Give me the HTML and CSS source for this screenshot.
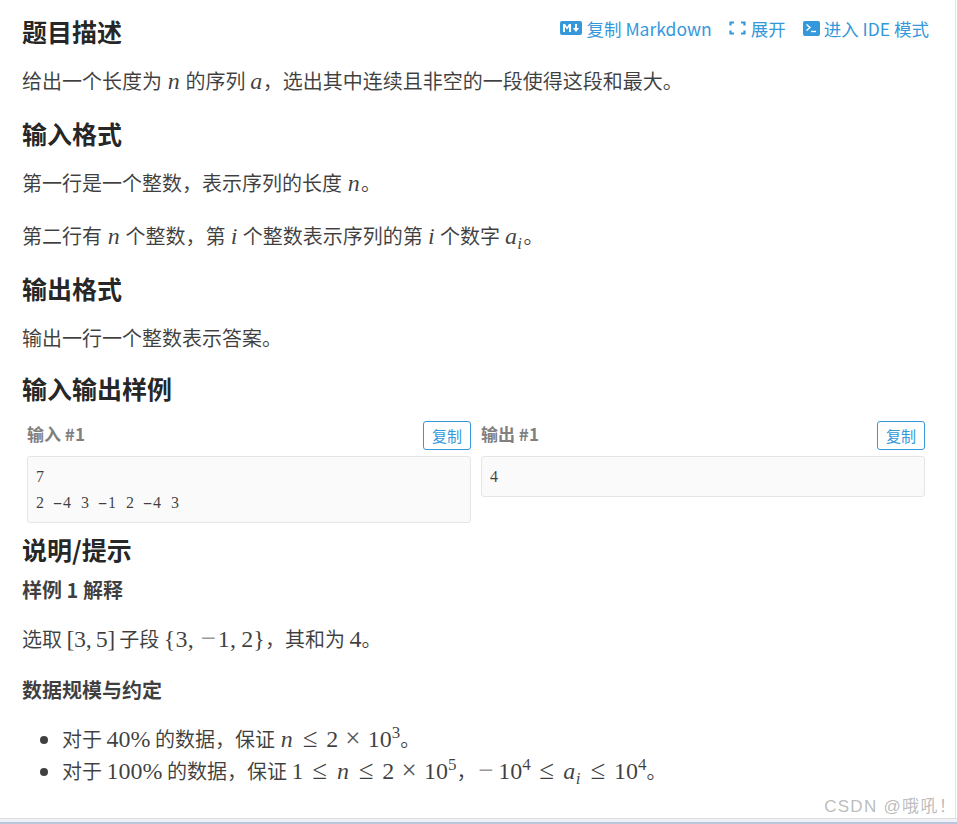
FILE: index.html
```html
<!DOCTYPE html>
<html lang="zh">
<head>
<meta charset="utf-8">
<title>题目描述</title>
<link rel="stylesheet" href="styles.css">
</head>
<body>
<main class="page">
  <div class="head-row">
    <h2>题目描述</h2>
    <div class="actions">
      <a class="action act-md"><svg class="ic-md" viewBox="0 0 22 14"><rect width="22" height="14" rx="2" fill="#3498db"/><path d="M3 11V3h2l2 3 2-3h2v8H9V6L7 8.500 5 6v5z" fill="#fff"/><path d="M15 3h2v4h2.200l-3.200 4-3.200-4H15z" fill="#fff"/></svg>复制 Markdown</a>
      <a class="action"><svg class="ic-ex" viewBox="0 0 17 14"><path d="M5 1.500H1.500v3M1.500 9.500v3H5M12 1.500h3.500v3M15.500 9.500v3H12" fill="none" stroke="#3498db" stroke-width="2.200"/></svg>展开</a>
      <a class="action act-ide"><svg class="ic-term" viewBox="0 0 17 15"><rect width="17" height="15" rx="2" fill="#3498db"/><path d="M3.500 3.500 7 6.500 3.500 9.500" fill="none" stroke="#fff" stroke-width="1.400"/><path d="M8 10.500h5" stroke="#fff" stroke-width="1.400"/></svg>进入 IDE 模式</a>
    </div>
  </div>
  <p class="p1">给出一个长度为 <i class="m vn">n</i> 的序列 <i class="m va">a</i>，选出其中连续且非空的一段使得这段和最大。</p>
  <h2 class="h2b">输入格式</h2>
  <p class="p2">第一行是一个整数，表示序列的长度 <i class="m vn">n</i>。</p>
  <p class="p3">第二行有 <i class="m vn">n</i> 个整数，第 <i class="m vi">i</i> 个整数表示序列的第 <i class="m vi">i</i> 个数字 <i class="m va">a</i><sub class="m">i</sub>。</p>
  <h2 class="h2c">输出格式</h2>
  <p class="p5">输出一行一个整数表示答案。</p>
  <h2 class="h2d">输入输出样例</h2>
  <div class="samples">
    <section class="sample">
      <div class="sample-head"><span class="sample-title">输入 #1</span><button class="copy">复制</button></div>
      <pre class="code">7
2 <span class="hy">-</span>4 3 <span class="hy">-</span>1 2 <span class="hy">-</span>4 3</pre>
    </section>
    <section class="sample">
      <div class="sample-head"><span class="sample-title">输出 #1</span><button class="copy">复制</button></div>
      <pre class="code">4</pre>
    </section>
  </div>
  <h2 class="h2e">说明/提示</h2>
  <h3 class="h3a">样例 1 解释</h3>
  <p class="p4">选取 <span class="m n tight">[3,&#8201;5]</span> 子段 <span class="m n brace">{3,&#8201;<span class="op minus">−</span>1,&#8201;2}</span>，其和为 <span class="m n">4</span>。</p>
  <h4 class="h4a">数据规模与约定</h4>
  <ul class="list">
    <li>对于 <span class="m n">40%</span> 的数据，保证 <i class="m vn">n</i><span class="op rel">≤</span><span class="m n">2</span><span class="op bin">×</span><span class="m n">10<sup>3</sup></span>。</li>
    <li>对于 <span class="m n">100%</span> 的数据，保证 <span class="m n">1</span><span class="op rel">≤</span><i class="m vn">n</i><span class="op rel">≤</span><span class="m n">2</span><span class="op bin">×</span><span class="m n">10<sup>5</sup></span>，<span class="op minus neg">−</span><span class="m n">10<sup>4</sup></span><span class="op rel">≤</span><i class="m va">a</i><sub class="m">i</sub><span class="op rel">≤</span><span class="m n">10<sup>4</sup></span>。</li>
  </ul>
</main>
<div class="bottom"></div>
<div class="watermark">CSDN @哦吼！</div>
</body>
</html>
```
FILE: styles.css
```css
html, body { margin: 0; padding: 0; background: #fff; }
body {
  width: 957px;
  height: 824px;
  overflow: hidden;
  position: relative;
  font-family: "Noto Sans CJK SC", "Noto Sans", sans-serif;
  color: rgba(0, 0, 0, .75);
  font-size: 20px;
}
.page {
  box-sizing: border-box;
  width: 956px;
  height: 818px;
  padding: 13px 27px 0 22px;
  border-right: 1px solid #e4e4e4;
}
h2 {
  font-size: 25px;
  line-height: 36px;
  font-weight: 700;
  margin: 0;
  color: rgba(0, 0, 0, .87);
}
p { margin: 0; line-height: 34px; }
.head-row { display: flex; justify-content: space-between; align-items: flex-start; }
.actions { display: flex; gap: 18px; align-items: center; height: 30px; font-size: 17.500px; color: #3498db; white-space: nowrap; margin-right: -1px; }
.action { display: flex; align-items: center; gap: 5px; }
.act-md { gap: 4px; margin-right: -1px; }
.act-ide { gap: 4px; margin-left: -1px; }
.ic-md { width: 22px; height: 14px; }
.ic-ex { width: 17px; height: 14px; }
.ic-term { width: 17px; height: 15px; }
.p1 { margin-top: 15px; }
.h2b { margin-top: 17px; }
.p2 { margin-top: 15px; }
.p3 { margin-top: 19px; }
.h2c { margin-top: 17px; }
.p5 { margin-top: 15px; }
.h2d { margin-top: 15px; }
.m { font-family: "Liberation Serif", serif; font-size: 24px; line-height: 1; }
.n { font-style: normal; }
.tight { letter-spacing: -.4px; }
.brace { letter-spacing: .2px; }
.vn, .vi, .va { display: inline-block; text-align: center; }
.vn { width: 14.500px; }
.vi { width: 8.300px; }
.va { width: 12.800px; }
.op {
  display: inline-block;
  width: 18.800px;
  text-align: center;
  font-family: "Liberation Serif", serif;
  font-size: 27px;
  line-height: 1;
}
.rel { margin: 0 6.700px; }
.bin { margin: 0 5.400px; color: #555; }
.minus { color: #999; }
.neg { margin-right: 3px; }
sub, sup { line-height: 0; }
sup { font-size: 17px; }
sub.m { font-size: 17px; font-style: italic; margin-right: 1.500px; }
.samples { display: flex; gap: 10px; padding: 0 5px; margin-top: 14px; align-items: flex-start; margin-right: -2px; }
.sample { flex: 1 1 0; min-width: 0; }
.sample-head { display: flex; justify-content: space-between; align-items: center; height: 30px; margin-bottom: 6px; }
.sample-title { font-size: 17px; font-weight: 700; color: #808080; padding-bottom: 4px; }
.copy {
  box-sizing: border-box;
  width: 48px;
  height: 29px;
  padding: 0;
  background: #fff;
  border: 1px solid #3498db;
  border-radius: 3px;
  font: 15px "Noto Sans CJK SC", sans-serif;
  color: #3498db;
}
.code {
  margin: 0;
  padding: 7px 8px 6px;
  background: #fafafa;
  border: 1px solid #e5e5e5;
  border-radius: 3px;
  font-family: "Liberation Serif", serif;
  font-size: 16px;
  letter-spacing: 1px;
  word-spacing: 4px;
  line-height: 26px;
  color: rgba(0, 0, 0, .75);
}
.hy { display: inline-block; width: 9px; text-align: center; transform: scaleX(1.800); }
.h2e { margin-top: 8px; }
.h3a { margin: 8px 0 0; font-size: 20px; line-height: 30px; font-weight: 700; }
.p4 { margin-top: 17px; }
.h4a { margin: 19px 0 0; font-size: 20px; line-height: 30px; font-weight: 700; }
.list { margin: 18px 0 0; padding: 0 0 0 40px; }
.list li { line-height: 32px; }
.bottom { height: 3px; border-top: 1px solid #ddd; background: #eef1f6; border-bottom: 2px solid #b9c6dc; }
.watermark {
  position: absolute;
  right: 0;
  bottom: 7px;
  font-family: "Liberation Sans", "Noto Sans CJK TC", sans-serif;
  font-size: 17px;
  letter-spacing: 1.300px;
  color: rgba(150, 150, 150, .65);
}
```
